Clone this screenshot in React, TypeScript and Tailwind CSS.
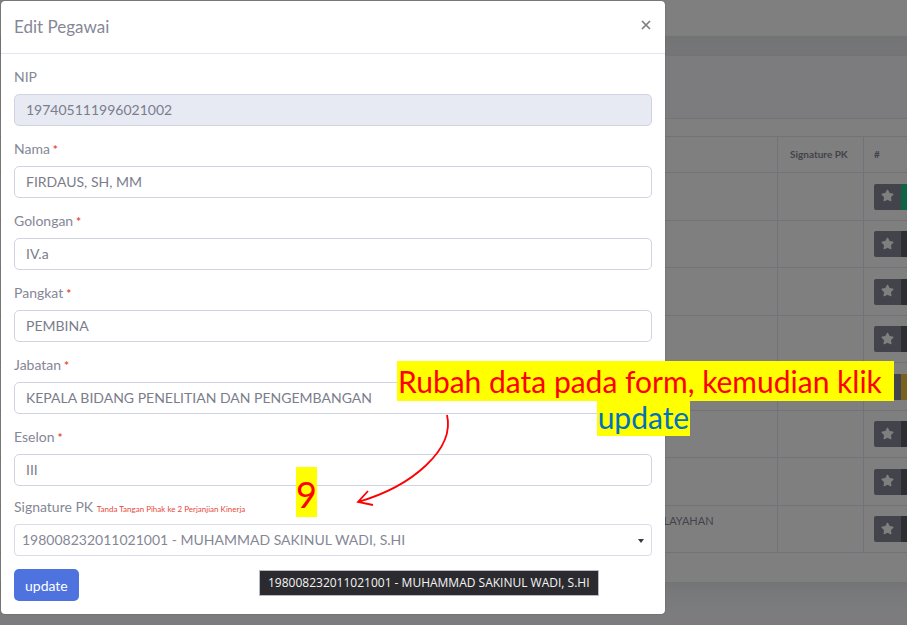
import { FaStar } from "react-icons/fa";

type Field = { id: string; label: string; value: string; required?: boolean; readOnly?: boolean };

const fields: Field[] = [
  { id: "nip", label: "NIP", value: "197405111996021002", readOnly: true },
  { id: "nama", label: "Nama", value: "FIRDAUS, SH, MM", required: true },
  { id: "golongan", label: "Golongan", value: "IV.a", required: true },
  { id: "pangkat", label: "Pangkat", value: "PEMBINA", required: true },
  { id: "jabatan", label: "Jabatan", value: "KEPALA BIDANG PENELITIAN DAN PENGEMBANGAN", required: true },
  { id: "eselon", label: "Eselon", value: "III", required: true },
];

const signer = "198008232011021001 - MUHAMMAD SAKINUL WADI, S.HI";

const rows = [
  { text: "", action: "bg-[#1cc88a]" },
  { text: "", action: "bg-[#5a5c69]" },
  { text: "", action: "bg-[#5a5c69]" },
  { text: "", action: "bg-[#5a5c69]" },
  { text: "", action: "bg-[#f6c23e]" },
  { text: "", action: "bg-[#5a5c69]" },
  { text: "", action: "bg-[#5a5c69]" },
  { text: "LAYAHAN", action: "bg-[#5a5c69]" },
];

function EmployeePage() {
  return (
    <div className="-mr-10 min-h-screen bg-[#f8f9fc] text-[#858796]">
      <header className="h-9 bg-white shadow-[0_2px_28px_rgba(58,59,69,0.15)]" />
      <main className="pt-5">
        <section className="bg-white shadow-[0_2px_28px_rgba(58,59,69,0.15)]">
          <div className="h-[63px] border-b border-[#e3e6f0] bg-[#f8f9fc]" />
          <div className="pt-[17px] pb-[29px]">
            <table className="w-full table-fixed border-collapse text-left text-[10px]">
              <thead>
                <tr className="h-9">
                  <th className="border-y border-[#e3e6f0]" />
                  <th className="w-[124px] border-y border-[#e3e6f0]" />
                  <th className="w-[86px] border border-[#e3e6f0] pl-3 font-bold whitespace-nowrap">Signature PK</th>
                  <th className="w-[83px] border border-[#e3e6f0] pl-[10px] font-bold">#</th>
                </tr>
              </thead>
              <tbody>
                {rows.map((row, i) => (
                  <tr key={i} className="odd:h-12 even:h-[47px]">
                    <td className="border-y border-[#e3e6f0]" />
                    <td className="border-y border-[#e3e6f0] pt-[7px] pl-[10px] align-top text-[11px]">{row.text}</td>
                    <td className="border border-[#e3e6f0]" />
                    <td className="border border-[#e3e6f0] pl-[10px]">
                      <div className="flex">
                        <button
                          type="button"
                          aria-label="Tandai"
                          className="flex h-[26px] w-[27px] shrink-0 items-center justify-center rounded-l-xs bg-[#858796] pb-0.5 text-white"
                        >
                          <FaStar size={13} />
                        </button>
                        <button type="button" aria-label="Aksi" className={`h-[26px] w-[27px] ${row.action}`} />
                      </div>
                    </td>
                  </tr>
                ))}
              </tbody>
            </table>
          </div>
        </section>
      </main>
    </div>
  );
}

function EditModal() {
  return (
    <div
      role="dialog"
      aria-labelledby="judul"
      className="mt-px ml-px w-full max-w-[664px] rounded-[4px] bg-white text-[#858796] shadow-[0_0_1px_rgba(0,0,0,0.6)]"
    >
      <div className="flex h-[53px] items-center justify-between border-b border-[#e3e6f0] px-[13px]">
        <h5 id="judul" className="text-[17px]">Edit Pegawai</h5>
        <button type="button" aria-label="Tutup" className="mb-1 flex h-5 w-3 items-center justify-center text-[#7f7f7f]">
          <svg width="10" height="10" viewBox="0 0 10 10" fill="none" stroke="currentColor" strokeWidth="1.7">
            <path d="M1 1l8 8M9 1l-8 8" />
          </svg>
        </button>
      </div>
      <form className="px-[13px] pt-3 pb-[13px] text-[14px]" onSubmit={(e) => e.preventDefault()}>
        {fields.map((f) => (
          <div key={f.id} className="mb-3">
            <label htmlFor={f.id} className="mb-2 block h-5 leading-[22px]">
              {f.label}
              {f.required && <span className="text-[12px] font-bold text-[#e74a3b]"> *</span>}
            </label>
            <input
              id={f.id}
              defaultValue={f.value}
              readOnly={f.readOnly}
              className="block h-8 w-full rounded-[5px] border border-[#d1d3e2] bg-white px-[11px] pb-0.5 text-[#7b7d8b] read-only:bg-[#e7eaf3]"
            />
          </div>
        ))}
        <label htmlFor="signature" className="mb-1.5 block h-5 leading-[18px]">
          Signature PK <span className="text-[8px] text-[#e74a3b]">Tanda Tangan Pihak ke 2 Perjanjian Kinerja</span>
        </label>
        <div className="relative">
          <select
            id="signature"
            className="block h-8 w-full appearance-none rounded-[4px] border border-[#d9dce6] bg-white px-[7px] pb-0.5"
          >
            <option>{signer}</option>
          </select>
          <svg
            className="pointer-events-none absolute top-[15px] right-2 text-[#343a40]"
            width="6"
            height="4"
            viewBox="0 0 6 4"
            fill="currentColor"
          >
            <path d="M0 0h6L3 4z" />
          </svg>
        </div>
        <button type="submit" className="mt-[13px] block h-8 rounded-[5px] bg-[#4e73df] px-[11px] text-white">
          update
        </button>
      </form>
    </div>
  );
}

function Annotations() {
  return (
    <>
      <div
        role="tooltip"
        className="absolute top-[570px] left-[259px] flex h-[26px] items-center border border-[#b9bbc4] bg-[#2b2b2f] px-2 font-['Open_Sans',sans-serif] text-[12px] whitespace-nowrap text-[#f4f4f4]"
      >
        {signer}
      </div>
      <div className="absolute top-[361px] left-[397px] text-center text-[30px] text-[#ff0000]">
        <p className="h-10 bg-[#ffff00] pr-3 pl-px leading-10 whitespace-nowrap">Rubah data pada form, kemudian klik</p>
        <p className="flex justify-center pr-1 text-[#0070c0]">
          <span className="h-[35px] bg-[#ffff00] px-px leading-8">update</span>
        </p>
      </div>
      <p className="absolute top-[467px] left-[296px] h-[50px] bg-[#ffff00] text-[36px] leading-[54px] text-[#ff0000]">9</p>
      <svg
        className="absolute top-[410px] left-[350px]"
        width="106"
        height="104"
        viewBox="350 410 106 104"
        fill="none"
        stroke="#ff0000"
        strokeWidth="1.8"
      >
        <path d="M447 415C455 449 413 486 358 502M368 491L358 502L373 505" />
      </svg>
    </>
  );
}

export default function App() {
  return (
    <div className="relative min-h-screen overflow-hidden font-[Lato,sans-serif]">
      <EmployeePage />
      <div className="absolute inset-0 bg-black/50">
        <EditModal />
        <Annotations />
      </div>
    </div>
  );
}
